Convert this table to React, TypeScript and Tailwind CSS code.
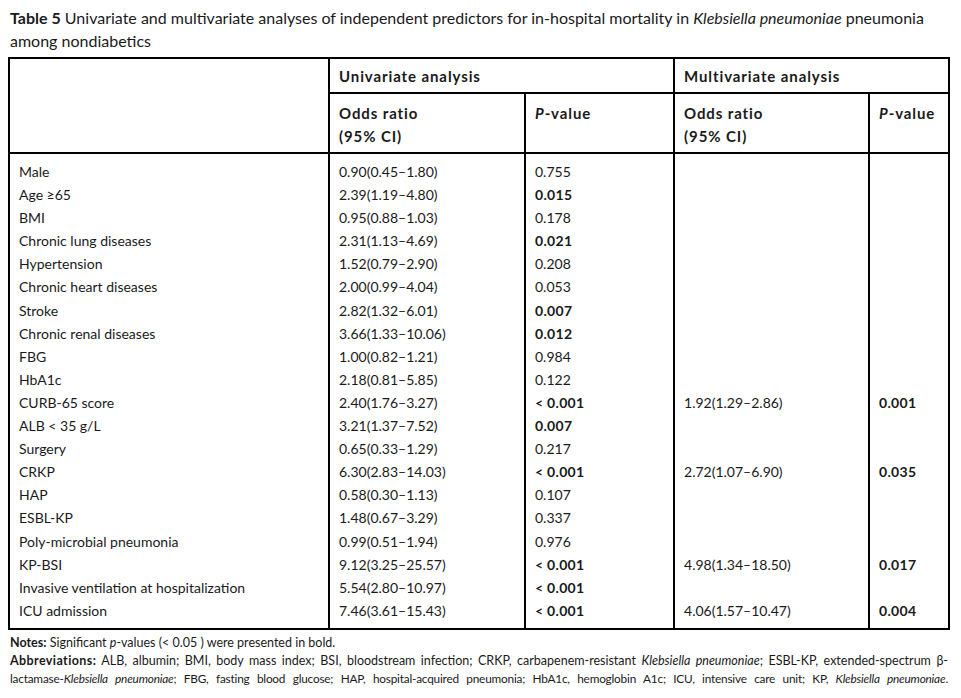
import React from "react";

type Row = {
  label: string;
  uOr: string;
  uP: string;
  uBold?: boolean;
  mOr?: string;
  mP?: string;
};

const rows: Row[] = [
  { label: "Male", uOr: "0.90(0.45–1.80)", uP: "0.755" },
  { label: "Age ≥65", uOr: "2.39(1.19–4.80)", uP: "0.015", uBold: true },
  { label: "BMI", uOr: "0.95(0.88–1.03)", uP: "0.178" },
  { label: "Chronic lung diseases", uOr: "2.31(1.13–4.69)", uP: "0.021", uBold: true },
  { label: "Hypertension", uOr: "1.52(0.79–2.90)", uP: "0.208" },
  { label: "Chronic heart diseases", uOr: "2.00(0.99–4.04)", uP: "0.053" },
  { label: "Stroke", uOr: "2.82(1.32–6.01)", uP: "0.007", uBold: true },
  { label: "Chronic renal diseases", uOr: "3.66(1.33–10.06)", uP: "0.012", uBold: true },
  { label: "FBG", uOr: "1.00(0.82–1.21)", uP: "0.984" },
  { label: "HbA1c", uOr: "2.18(0.81–5.85)", uP: "0.122" },
  { label: "CURB-65 score", uOr: "2.40(1.76–3.27)", uP: "< 0.001", uBold: true, mOr: "1.92(1.29–2.86)", mP: "0.001" },
  { label: "ALB < 35 g/L", uOr: "3.21(1.37–7.52)", uP: "0.007", uBold: true },
  { label: "Surgery", uOr: "0.65(0.33–1.29)", uP: "0.217" },
  { label: "CRKP", uOr: "6.30(2.83–14.03)", uP: "< 0.001", uBold: true, mOr: "2.72(1.07–6.90)", mP: "0.035" },
  { label: "HAP", uOr: "0.58(0.30–1.13)", uP: "0.107" },
  { label: "ESBL-KP", uOr: "1.48(0.67–3.29)", uP: "0.337" },
  { label: "Poly-microbial pneumonia", uOr: "0.99(0.51–1.94)", uP: "0.976" },
  { label: "KP-BSI", uOr: "9.12(3.25–25.57)", uP: "< 0.001", uBold: true, mOr: "4.98(1.34–18.50)", mP: "0.017" },
  { label: "Invasive ventilation at hospitalization", uOr: "5.54(2.80–10.97)", uP: "< 0.001", uBold: true },
  { label: "ICU admission", uOr: "7.46(3.61–15.43)", uP: "< 0.001", uBold: true, mOr: "4.06(1.57–10.47)", mP: "0.004" },
];

const cell = "border-x-2 border-black px-[9px]";
const head = "text-left text-[15px] font-bold tracking-[0.9px]";

export default function App() {
  return (
    <div className="min-h-screen bg-white px-2 pt-[6px] text-[#1a1a1a] font-['Lato','Open_Sans',sans-serif]">
      <div className="pl-[2px] text-[16px] leading-[23px]">
        <p className="whitespace-nowrap">
          <b>Table 5</b> Univariate and multivariate analyses of independent predictors for in-hospital mortality in{" "}
          <i>Klebsiella pneumoniae</i> pneumonia
        </p>
        <p>among nondiabetics</p>
      </div>

      <table className="mt-[5px] w-[940px] table-fixed border-collapse border-2 border-black text-[14px]">
        <colgroup>
          <col className="w-[320px]" />
          <col className="w-[196px]" />
          <col className="w-[149px]" />
          <col className="w-[195px]" />
          <col className="w-[80px]" />
        </colgroup>
        <thead>
          <tr className="h-[35px]">
            <th rowSpan={2} className={cell} />
            <th colSpan={2} className={`${cell} ${head} border-b-2 pt-[2px] align-middle`}>
              Univariate analysis
            </th>
            <th colSpan={2} className={`${cell} ${head} border-b-2 pt-[2px] align-middle`}>
              Multivariate analysis
            </th>
          </tr>
          <tr className="border-b-2 border-black">
            <th className={`${cell} ${head} h-[60px] pt-[8px] align-top leading-[22.5px]`}>
              Odds ratio
              <br />
              (95% CI)
            </th>
            <th className={`${cell} ${head} pt-[8px] align-top leading-[22.5px]`}>
              <i>P</i>-value
            </th>
            <th className={`${cell} ${head} pt-[8px] align-top leading-[22.5px]`}>
              Odds ratio
              <br />
              (95% CI)
            </th>
            <th className={`${cell} ${head} pt-[8px] align-top leading-[22.5px]`}>
              <i>P</i>-value
            </th>
          </tr>
        </thead>
        <tbody className="leading-[23.1px]">
          {rows.map((r, i) => {
            const pad = i === 0 ? "pt-[6px]" : i === rows.length - 1 ? "pb-[6px]" : "";
            return (
              <tr key={r.label}>
                <td className={`${cell} ${pad} align-top`}>{r.label}</td>
                <td className={`${cell} ${pad} align-top`}>{r.uOr}</td>
                <td className={`${cell} ${pad} align-top ${r.uBold ? "font-bold tracking-[0.3px]" : ""}`}>{r.uP}</td>
                <td className={`${cell} ${pad} align-top`}>{r.mOr ?? ""}</td>
                <td className={`${cell} ${pad} align-top font-bold tracking-[0.3px]`}>{r.mP ?? ""}</td>
              </tr>
            );
          })}
        </tbody>
      </table>

      <div className="mt-[4px] w-[940px] pl-[2px] text-[12.5px] leading-[18px]">
        <p>
          <b>Notes:</b> Significant <i>p</i>-values (&lt; 0.05 ) were presented in bold.
        </p>
        <p className="text-justify [text-align-last:justify]">
          <b className="tracking-[0.4px]">Abbreviations:</b> ALB, albumin; BMI, body mass index; BSI, bloodstream
          infection; CRKP, carbapenem-resistant <i>Klebsiella pneumoniae</i>; ESBL-KP, extended-spectrum β-
        </p>
        <p className="text-justify text-[11.8px] tracking-[-0.2px] [text-align-last:justify]">
          lactamase-<i>Klebsiella pneumoniae</i>; FBG, fasting blood glucose; HAP, hospital-acquired pneumonia; HbA1c,
          hemoglobin A1c; ICU, intensive care unit; KP, <i>Klebsiella pneumoniae</i>.
        </p>
      </div>
    </div>
  );
}
